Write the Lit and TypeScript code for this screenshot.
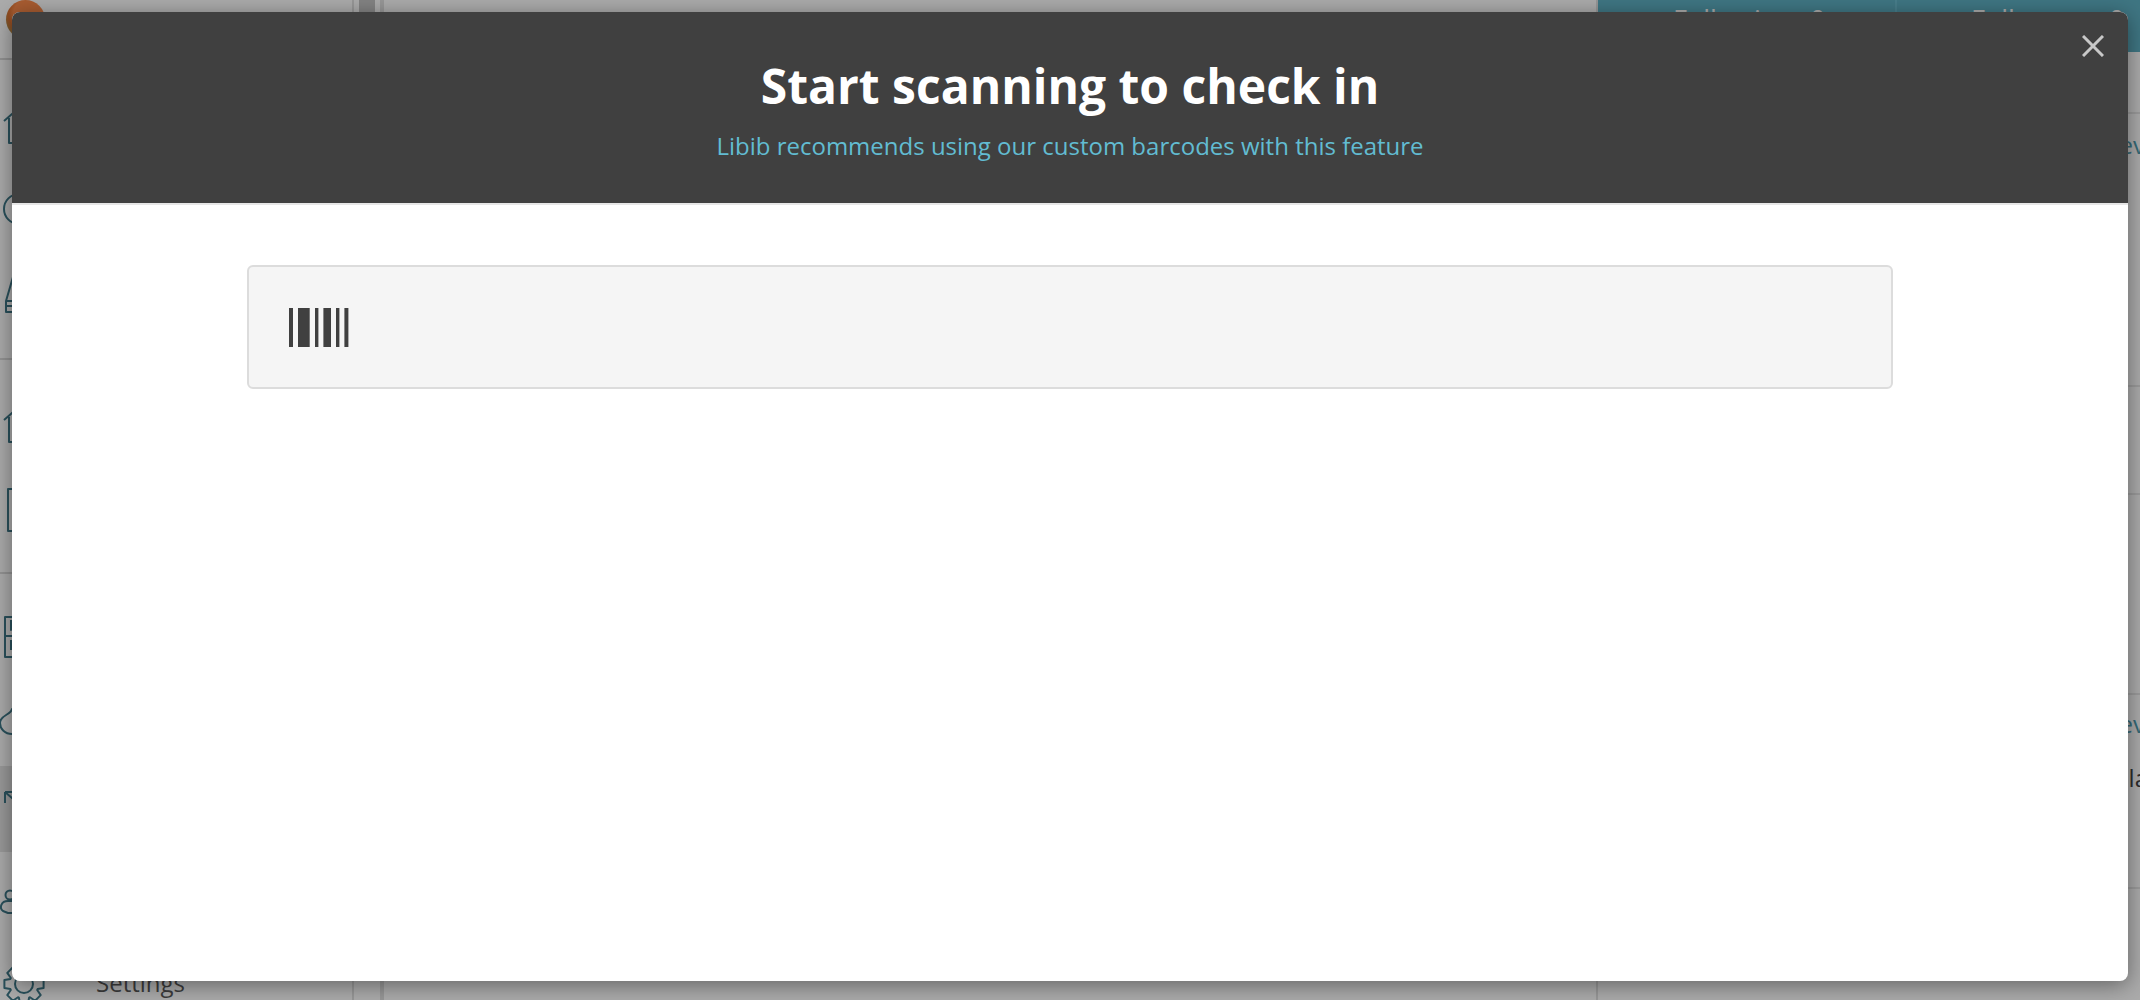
import { LitElement, html, css, svg } from "lit";
import { customElement } from "lit/decorators.js";

const gearPath = (() => {
  const cx = 24, cy = 19, n = 8, ro = 20, ri = 14.5;
  let d = "";
  for (let i = 0; i < n; i++) {
    const a = (i / n) * Math.PI * 2 - Math.PI / 2;
    const w = 0.2, s = 0.36;
    const pts: [number, number][] = [
      [ri, a - s], [ro, a - w], [ro, a + w], [ri, a + s],
    ];
    pts.forEach(([r, t], j) => {
      const x = (cx + r * Math.cos(t)).toFixed(1);
      const y = (cy + r * Math.sin(t)).toFixed(1);
      d += (i === 0 && j === 0 ? "M" : "L") + x + " " + y + " ";
    });
  }
  return d + "Z";
})();

const icons: Record<string, unknown> = {
  home: svg`<path d="M0 12 L8 5 L22 -2 L44 12 M5 9 V34 H38 V9"/>`,
  circle: svg`<circle cx="16" cy="20" r="15"/><path d="M16 13 V20"/>`,
  cone: svg`<path d="M2 37 V26 L9 2 L30 2 L38 26 V37 Z M2 26 H38 M2 31 H38"/>`,
  square: svg`<rect x="4" y="1" width="34" height="42"/>`,
  book: svg`<path d="M1 1 H36 V41 H1 Z M1 20 H36 M7 4 V14 L11 9 L15 14 V4 M7 24 V34"/>`,
  cloud: svg`<path d="M12 8 C11 14 0 14 0 22 C0 28 5 33 12 33 H34 C44 33 44 20 34 19 C30 8 18 4 12 8 Z"/>`,
  arrow: svg`<path d="M1 3 H16 M1 3 V14 M1 3 L30 28"/>`,
  person: svg`<circle cx="6" cy="18" r="4.5"/><path d="M4 24 C-3 24 -5 31 -1 34 L4 36 H30 V24 Z"/>`,
  gear: svg`<path d=${gearPath}/><circle cx="24" cy="19" r="9"/>`,
};

const barcode: [number, number][] = [
  [0, 4], [9, 11.7], [26, 3.4], [34.4, 7.6], [47, 3.4], [55.4, 4],
];

interface Row { h: number; icon: string; pad: number; active?: boolean; label?: string }
interface Group { top: number; height: number; rows: Row[] }

const groups: Group[] = [
  { top: 28, height: 300, rows: [
    { h: 82, icon: "home", pad: 4 },
    { h: 78, icon: "circle", pad: 3 },
    { h: 94, icon: "cone", pad: 4 },
  ] },
  { top: 28, height: 214, rows: [
    { h: 80, icon: "home", pad: 4 },
    { h: 80, icon: "square", pad: 4 },
  ] },
  { top: 22, height: 0, rows: [
    { h: 80, icon: "book", pad: 4 },
    { h: 90, icon: "cloud", pad: 0 },
    { h: 86, icon: "arrow", pad: 4, active: true },
    { h: 90, icon: "person", pad: 4 },
    { h: 86, icon: "gear", pad: 0, label: "Settings" },
  ] },
];

const panelRows: { h: number; text?: string; top?: number; extra?: boolean }[] = [
  { h: 62 },
  { h: 273, text: "Rev", top: 16 },
  { h: 108 },
  { h: 200 },
  { h: 194, text: "Rev", top: 14, extra: true },
];

@customElement("app-root")
export class AppRoot extends LitElement {
  static styles = css`
    :host {
      display: block;
      position: relative;
      height: 1000px;
      overflow: hidden;
      font-family: "Open Sans", sans-serif;
      background: #fff;
    }
    .page { display: flex; height: 1000px; }
    .sidebar {
      width: 352px;
      flex: none;
      border-right: 2px solid #e2e2e2;
    }
    .brand {
      height: 60px;
      padding-left: 6px;
      border-bottom: 2px solid #d8d8d8;
      box-sizing: border-box;
    }
    .avatar {
      display: block;
      width: 39px;
      height: 39px;
      border-radius: 50%;
      background: radial-gradient(circle at 60% 36%, #fb8a4a 0 46%, #dc7232 60%, #b68a48 76%, #6b5228 88%, #2c2114 100%);
    }
    .group { border-bottom: 2px solid #dcdcdc; box-sizing: border-box; }
    .group:last-child { border-bottom: 0; }
    .row {
      display: flex;
      align-items: center;
      box-sizing: border-box;
      gap: 52px;
      font-size: 24px;
      color: #5a5a5a;
    }
    .row.active { background: #e4e4e4; }
    .row span { margin-bottom: 6px; }
    .row svg {
      flex: none;
      fill: none;
      stroke: #3f7a8a;
      stroke-width: 2;
      stroke-linejoin: round;
      overflow: visible;
    }
    .gutter {
      width: 26px;
      flex: none;
      background: #fff;
      display: flex;
      justify-content: center;
    }
    .thumb { width: 16px; height: 40px; background: #c4c4c4; }
    .main {
      flex: 1;
      border-left: 4px solid #e2e2e2;
      border-right: 2px solid #e2e2e2;
    }
    .panel { width: 542px; flex: none; overflow: hidden; }
    .stats { display: flex; height: 52px; background: #5fb0c4; color: #fff; }
    .stat {
      display: flex;
      gap: 18px;
      font-size: 27px;
      line-height: 32px;
      height: 52px;
      padding-top: 4px;
      box-sizing: border-box;
      white-space: nowrap;
    }
    .stat.first { width: 299px; padding-left: 75px; border-right: 2px solid #6cbccf; }
    .stat.second { flex: 1; padding-left: 74px; }
    .panel-row {
      border-bottom: 2px solid #e8e8e8;
      box-sizing: border-box;
      display: flex;
      flex-direction: column;
      align-items: flex-end;
      font-size: 24px;
      line-height: 30px;
    }
    .panel-row .link { color: #4f9db2; margin-right: -5px; }
    .panel-row .plain { color: #444; margin-top: 24px; margin-right: -8px; }
    .overlay {
      position: absolute;
      inset: 0;
      background: rgba(0, 0, 0, 0.33);
      padding: 12px 12px 19px;
      box-sizing: border-box;
      display: flex;
    }
    .modal {
      flex: 1;
      position: relative;
      background: #fff;
      border-radius: 8px;
      overflow: hidden;
      display: flex;
      flex-direction: column;
      box-shadow: 0 4px 22px rgba(0, 0, 0, 0.42);
    }
    .head {
      height: 193px;
      flex: none;
      background: #404040;
      border-bottom: 2px solid #e6e6e6;
      box-sizing: border-box;
      display: flex;
      flex-direction: column;
      align-items: center;
      text-align: center;
    }
    .head h1 {
      margin: 43px 0 0;
      color: #fff;
      font-size: 48px;
      font-weight: 700;
      line-height: 62px;
    }
    .head p {
      margin: 12px 0 0;
      color: #62bcd2;
      font-size: 24px;
      line-height: 34px;
    }
    .close {
      position: absolute;
      right: 24px;
      top: 23px;
      width: 22px;
      height: 22px;
      stroke: #c8c8c8;
      stroke-width: 3;
      fill: none;
    }
    .body { padding: 60px 235px 0 235px; }
    .scan {
      height: 124px;
      box-sizing: border-box;
      background: #f5f5f5;
      border: 2px solid #dcdcdc;
      border-radius: 6px;
      padding-left: 40px;
      display: flex;
      align-items: center;
    }
    .scan svg { display: block; fill: #404040; }
  `;

  private renderRow(r: Row) {
    return html`<div class="row ${r.active ? "active" : ""}" style="height:${r.h}px;padding-left:${r.pad}px">
      <svg width="44" height="40" viewBox="0 0 44 40">${icons[r.icon]}</svg>
      ${r.label ? html`<span>${r.label}</span>` : ""}
    </div>`;
  }

  render() {
    return html`
      <div class="page">
        <aside class="sidebar">
          <div class="brand"><span class="avatar"></span></div>
          ${groups.map(
            (g) => html`<div class="group" style="padding-top:${g.top}px;${g.height ? `height:${g.height}px` : ""}">
              ${g.rows.map((r) => this.renderRow(r))}
            </div>`
          )}
        </aside>
        <div class="gutter"><div class="thumb"></div></div>
        <main class="main"></main>
        <aside class="panel">
          <div class="stats">
            <div class="stat first"><span>Following</span><span>0</span></div>
            <div class="stat second"><span>Followers</span><span>0</span></div>
          </div>
          ${panelRows.map(
            (p) => html`<div class="panel-row" style="height:${p.h}px;padding-top:${p.top ?? 0}px">
              ${p.text ? html`<span class="link">${p.text}</span>` : ""}
              ${p.extra ? html`<span class="plain">la</span>` : ""}
            </div>`
          )}
        </aside>
      </div>
      <div class="overlay">
        <div class="modal">
          <header class="head">
            <h1>Start scanning to check in</h1>
            <p>Libib recommends using our custom barcodes with this feature</p>
          </header>
          <svg class="close" viewBox="0 0 22 22"><path d="M1 1 L21 21 M21 1 L1 21"/></svg>
          <div class="body">
            <div class="scan">
              <svg width="60" height="39" viewBox="0 0 60 39">
                ${barcode.map(([x, w]) => svg`<rect x=${x} y="0" width=${w} height="39"/>`)}
              </svg>
            </div>
          </div>
        </div>
      </div>
    `;
  }
}
